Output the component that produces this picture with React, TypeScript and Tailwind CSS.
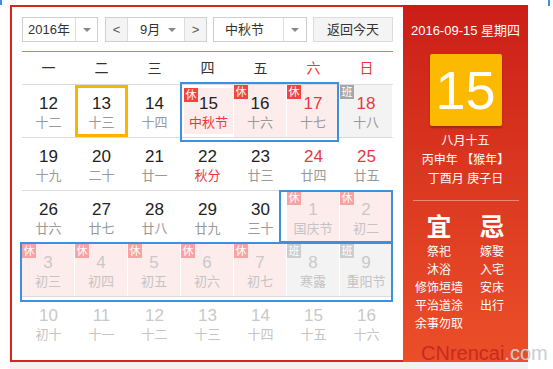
import React from 'react';

type Day = {
  n: number;
  l: string;
  lunarRed?: boolean;
  numRed?: boolean;
  faded?: boolean;
  tag?: '休' | '班';
  ring?: boolean;
};

const rows: Day[][] = [
  [
    { n: 12, l: '十二' },
    { n: 13, l: '十三', ring: true },
    { n: 14, l: '十四' },
    { n: 15, l: '中秋节', lunarRed: true, tag: '休', ring: true },
    { n: 16, l: '十六', tag: '休' },
    { n: 17, l: '十七', tag: '休', numRed: true },
    { n: 18, l: '十八', tag: '班', numRed: true },
  ],
  [
    { n: 19, l: '十九' },
    { n: 20, l: '二十' },
    { n: 21, l: '廿一' },
    { n: 22, l: '秋分', lunarRed: true },
    { n: 23, l: '廿三' },
    { n: 24, l: '廿四', numRed: true },
    { n: 25, l: '廿五', numRed: true },
  ],
  [
    { n: 26, l: '廿六' },
    { n: 27, l: '廿七' },
    { n: 28, l: '廿八' },
    { n: 29, l: '廿九' },
    { n: 30, l: '三十' },
    { n: 1, l: '国庆节', faded: true, tag: '休' },
    { n: 2, l: '初二', faded: true, tag: '休' },
  ],
  [
    { n: 3, l: '初三', faded: true, tag: '休' },
    { n: 4, l: '初四', faded: true, tag: '休' },
    { n: 5, l: '初五', faded: true, tag: '休' },
    { n: 6, l: '初六', faded: true, tag: '休' },
    { n: 7, l: '初七', faded: true, tag: '休' },
    { n: 8, l: '寒露', faded: true, tag: '班' },
    { n: 9, l: '重阳节', faded: true, tag: '班' },
  ],
  [
    { n: 10, l: '初十', faded: true },
    { n: 11, l: '十一', faded: true },
    { n: 12, l: '十二', faded: true },
    { n: 13, l: '十三', faded: true },
    { n: 14, l: '十四', faded: true },
    { n: 15, l: '十五', faded: true },
    { n: 16, l: '十六', faded: true },
  ],
];

const weekdays = ['一', '二', '三', '四', '五', '六', '日'];

const Arrow = () => (
  <span className="w-0 h-0 border-l-[4px] border-r-[4px] border-t-[4px] border-l-transparent border-r-transparent border-t-[#888]" />
);

function Cell({ d }: { d: Day }) {
  let bg = '';
  if (d.tag === '休') bg = 'bg-[#fdecec] border-r border-white';
  if (d.tag === '班') bg = 'bg-[#f3f3f3] border-r border-white';

  let numColor = 'text-[#222]';
  if (d.numRed) numColor = 'text-[#e8383d]';
  if (d.faded) numColor = 'text-[#c9c9c9]';

  let lunarColor = 'text-[#999]';
  if (d.lunarRed) lunarColor = 'text-[#e8383d]';
  if (d.faded) lunarColor = 'text-[#c4c4c4]';

  let badge = '';
  if (d.tag === '休') badge = d.faded ? 'bg-[#f7a3a3]' : 'bg-[#f2443e]';
  if (d.tag === '班') badge = d.faded ? 'bg-[#cdcdcd]' : 'bg-[#a6a6a6]';

  return (
    <div
      className={`relative h-full flex flex-col items-center ${bg} ${
        d.ring ? 'border-[3px] border-[#fbb500] pt-[6px]' : 'pt-[9px]'
      }`}
    >
      {d.tag && (
        <span
          className={`absolute top-0 left-0 w-[14px] h-[14px] text-[11px] leading-[14px] text-center text-white ${badge}`}
        >
          {d.tag}
        </span>
      )}
      <span className={`text-[17px] leading-[20px] ${numColor}`}>{d.n}</span>
      <span className={`mt-[1px] text-[13px] leading-[16px] ${lunarColor}`}>{d.l}</span>
    </div>
  );
}

export default function App() {
  return (
    <div className="relative w-[553px] h-[369px] bg-white overflow-hidden font-['Liberation_Sans','Noto_Sans_CJK_SC',sans-serif]">
      {/* stray marks at the edges */}
      <div className="absolute left-0 top-0 w-[2px] h-[5px] bg-[#3d8fe0]" />
      <div className="absolute left-[548px] top-0 w-[2px] h-[6px] bg-[#3d8fe0]" />

      <div className="pl-[10px] pt-[5px]">
        <div className="flex w-[518px] h-[357px]">
          {/* calendar */}
          <div className="w-[393px] border-l-2 border-t-2 border-b-2 border-[#d8241e] px-[10px] pt-[10px]">
            <div className="flex items-center h-[25px] text-[13px] text-[#333]">
              <div className="flex h-full w-[76px] border border-[#cfcfcf]">
                <div className="w-[52px] flex items-center justify-center">2016年</div>
                <div className="flex-1 border-l border-[#ddd] flex items-center justify-center">
                  <Arrow />
                </div>
              </div>
              <div className="ml-[7px] flex h-full w-[102px] border border-[#cfcfcf]">
                <div className="w-[21px] bg-[#f4f4f4] flex items-center justify-center text-[#555]">&lt;</div>
                <div className="flex-1 border-l border-r border-[#ddd] flex items-center pl-[12px] pr-[8px] justify-between">
                  <span>9月</span>
                  <Arrow />
                </div>
                <div className="w-[21px] bg-[#f4f4f4] flex items-center justify-center text-[#555]">&gt;</div>
              </div>
              <div className="ml-[6px] flex h-full w-[94px] border border-[#cfcfcf]">
                <div className="w-[69px] flex items-center pl-[11px]">中秋节</div>
                <div className="flex-1 border-l border-[#ddd] flex items-center justify-center">
                  <Arrow />
                </div>
              </div>
              <button className="ml-[6px] h-full w-[80px] bg-[#f4f4f4] border border-[#dcdcdc] flex items-center justify-center">
                返回今天
              </button>
            </div>

            <div className="mt-[9px] h-px bg-[#f36b6b]" />

            <div className="grid grid-cols-7 h-[33px] border-b border-[#dcdcdc] text-[14px] items-center">
              {weekdays.map((w, i) => (
                <div key={w} className={`text-center ${i > 4 ? 'text-[#e8383d]' : 'text-[#333]'}`}>
                  {w}
                </div>
              ))}
            </div>

            {rows.map((r, ri) => (
              <div
                key={ri}
                className={`grid grid-cols-7 h-[53px] ${ri < 4 ? 'border-b border-[#dcdcdc]' : ''}`}
              >
                {r.map((d, di) => (
                  <Cell key={di} d={d} />
                ))}
              </div>
            ))}
          </div>

          {/* side panel */}
          <div className="w-[125px] h-full bg-linear-to-b from-[#cb1d18] to-[#ec4e29] flex flex-col items-center text-white">
            <div className="mt-[18px] text-[13px] leading-[16px]">2016-09-15 星期四</div>
            <div className="mt-[15px] w-[72px] h-[72px] bg-[#fbb900] rounded-[2px] shadow-[0_2px_2px_rgba(0,0,0,0.25)] flex items-center justify-center text-[54px] leading-none">
              15
            </div>
            <div className="mt-[6px] text-[12px] leading-[19px] text-center">
              <div>八月十五</div>
              <div>丙申年 【猴年】</div>
              <div>丁酉月 庚子日</div>
            </div>
            <div className="mt-[11px] w-[106px] h-px bg-white/40" />
            <div className="mt-[12px] flex">
              <div className="w-[53px] flex flex-col items-center">
                <div className="text-[25px] leading-[28px] font-bold">宜</div>
                <div className="mt-[2px] text-[12px] leading-[18px] flex flex-col items-center">
                  <span>祭祀</span>
                  <span>沐浴</span>
                  <span>修饰垣墙</span>
                  <span>平治道涂</span>
                  <span>余事勿取</span>
                </div>
              </div>
              <div className="w-[53px] flex flex-col items-center">
                <div className="text-[25px] leading-[28px] font-bold">忌</div>
                <div className="mt-[2px] text-[12px] leading-[18px] flex flex-col items-center">
                  <span>嫁娶</span>
                  <span>入宅</span>
                  <span>安床</span>
                  <span>出行</span>
                </div>
              </div>
            </div>
          </div>
        </div>
        <div className="w-[518px] h-[7px] bg-[#f2f2f2]" />
      </div>

      {/* holiday group outlines */}
      <div className="absolute left-[180px] top-[82px] w-[159px] h-[60px] border-2 border-[#3d8fe0]" />
      <div className="absolute left-[279px] top-[190px] w-[114px] h-[53px] border-2 border-[#3d8fe0]" />
      <div className="absolute left-[20px] top-[242px] w-[373px] h-[60px] border-2 border-[#3d8fe0]" />

      {/* watermark */}
      <div className="absolute left-[421px] top-[341px] text-[20px] leading-[24px] whitespace-nowrap">
        <span className="text-[#c72a1f]">CNrencai</span>
        <span className="text-[#c9ced6]">.com</span>
      </div>
    </div>
  );
}
